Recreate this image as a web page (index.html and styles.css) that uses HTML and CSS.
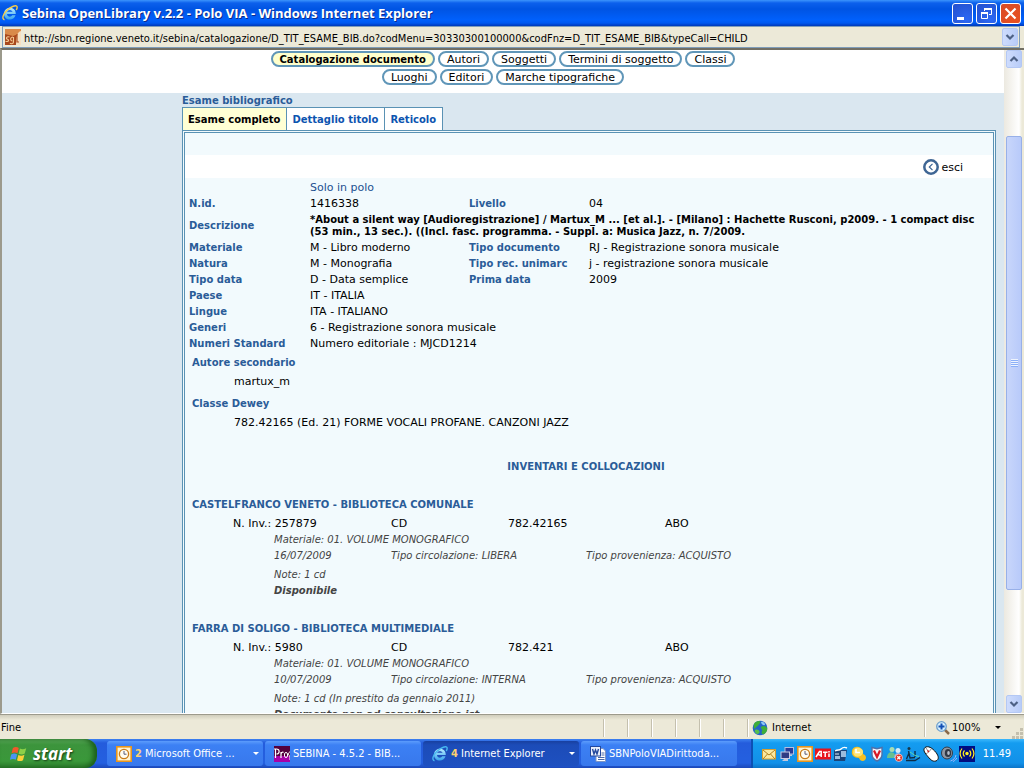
FILE: index.html
```html
<!DOCTYPE html>
<html lang="it">
<head>
<meta charset="utf-8">
<title>Sebina OpenLibrary v.2.2 - Polo VIA</title>
<link rel="stylesheet" href="styles.css">
</head>
<body>
<svg class="defs" aria-hidden="true">
  <defs>
    <linearGradient id="ieg" x1="0" y1="0" x2="0" y2="1"><stop offset="0" stop-color="#b8ecff"/><stop offset="1" stop-color="#38a4ec"/></linearGradient>
    <symbol id="ie" viewBox="0 0 16 16">
      <path d="M13.800 9H5c.2 3.300 4.400 3.300 5.200 1.300h3.300c-1 3-3.200 4.200-5.500 4.200-3.500 0-6-2.300-6-5.800S4.600 2.700 8 2.700c3.500 0 5.900 2.400 5.800 6.300zM10.600 6.800C10.200 4.700 5.500 4.700 5.100 6.800z" fill="url(#ieg)"/>
      <path d="M2.500 14.800C-.5 14 1 9 5 5.200 9 1.400 14.300-.4 15 1.600c.3.900-.1 2.300-.8 3.400" fill="none" stroke="#f6cc48" stroke-width="1.400"/>
    </symbol>
    <symbol id="ieblue" viewBox="0 0 16 16">
      <path d="M13.800 9H5c.2 3.300 4.400 3.300 5.200 1.300h3.300c-1 3-3.200 4.200-5.500 4.200-3.500 0-6-2.300-6-5.800S4.600 2.700 8 2.700c3.500 0 5.900 2.400 5.800 6.300zM10.600 6.800C10.200 4.700 5.500 4.700 5.100 6.800z" fill="url(#ieg)"/>
      <path d="M2.500 14.800C-.5 14 1 9 5 5.200 9 1.400 14.300-.4 15 1.600c.3.900-.1 2.300-.8 3.400" fill="none" stroke="#48b8f0" stroke-width="1.400"/>
    </symbol>
    <symbol id="clock" viewBox="0 0 16 16">
      <rect x=".8" y=".8" width="14.400" height="14.400" fill="#fff3d0" stroke="#e8951c" stroke-width="1.600"/>
      <circle cx="8" cy="8" r="4.600" fill="#fffdf2" stroke="#c97a18" stroke-width="1.300"/>
      <path d="M8 5v3.200h2.500" fill="none" stroke="#5a5a78" stroke-width="1"/>
    </symbol>
    <symbol id="chevdown" viewBox="0 0 10 8"><path d="M1.500 2L5 5.500 8.500 2" fill="none" stroke="#4d6185" stroke-width="2.200"/></symbol>
  </defs>
</svg>

<header class="titlebar">
  <svg class="ico"><use href="#ie"/></svg>
  <h1>Sebina OpenLibrary v.2.2 - Polo VIA - Windows Internet Explorer</h1>
  <button class="winbtn" aria-label="Riduci a icona"><svg viewBox="0 0 19 19"><path d="M4 14.500h7" stroke="#fff" stroke-width="3"/></svg></button>
  <button class="winbtn" aria-label="Ripristina"><svg viewBox="0 0 19 19"><path d="M7.500 7V4.500h7v6H12M4.500 8.500h6v6h-6z" fill="none" stroke="#fff"/><path d="M7 5h8M4 9h7" stroke="#fff" stroke-width="2"/></svg></button>
  <button class="winbtn close" aria-label="Chiudi"><svg viewBox="0 0 19 19"><path d="M4.500 4.500l10 10m0-10l-10 10" stroke="#fff" stroke-width="2.200"/></svg></button>
</header>

<div class="address">
  <svg class="ico" viewBox="0 0 16 16"><rect width="16" height="16" fill="#a8481c"/><path d="M0 0h16v4L8 7 0 5z" fill="#d98a4a"/><path d="M11 16c0-8 1-13 5-14v14z" fill="#f6dfc0"/><path d="M4.500 8c-3-1-4 1.500-2 2.200s1 3-2 2M8 8c-3 0-3 4-.5 4M8.500 8v5c0 2-3 2-3.500 1" fill="none" stroke="#f4c890" stroke-width="1.100"/><path d="M12 5v8h2" fill="none" stroke="#b05020" stroke-width="1.200"/></svg>
  <input type="text" aria-label="Indirizzo" value="http://sbn.regione.veneto.it/sebina/catalogazione/D_TIT_ESAME_BIB.do?codMenu=30330300100000&amp;codFnz=D_TIT_ESAME_BIB&amp;typeCall=CHILD">
  <button class="bluebtn" aria-label="Mostra indirizzi"><svg viewBox="0 0 10 8"><use href="#chevdown"/></svg></button>
</div>

<div class="window">
  <main class="page">
    <nav class="pills">
      <div class="pillrow"><a href="#" class="pill current">Catalogazione documento</a><a href="#" class="pill">Autori</a><a href="#" class="pill">Soggetti</a><a href="#" class="pill">Termini di soggetto</a><a href="#" class="pill">Classi</a></div>
      <div class="pillrow"><a href="#" class="pill">Luoghi</a><a href="#" class="pill">Editori</a><a href="#" class="pill">Marche tipografiche</a></div>
    </nav>
    <div class="body">
      <h2>Esame bibliografico</h2>
      <nav class="tabs"><a href="#" class="tab current">Esame completo</a><a href="#" class="tab">Dettaglio titolo</a><a href="#" class="tab">Reticolo</a></nav>
      <section class="panel">
        <div class="tools"><a href="#" class="exit"><svg viewBox="0 0 16 16"><circle cx="8" cy="8" r="6.700" fill="#fff" stroke="#3f6694" stroke-width="2.500"/><path d="M9.500 4.800L6.300 8l3.200 3.200" fill="none" stroke="#3f6694" stroke-width="1.200"/></svg><span>esci</span></a></div>
        <table class="details">
          <colgroup><col class="c1"><col class="c2"><col class="c3"><col></colgroup>
          <tr><td></td><td colspan="3" class="scope">Solo in polo</td></tr>
          <tr><th>N.id.</th><td>1416338</td><th>Livello</th><td>04</td></tr>
          <tr><th>Descrizione</th><td colspan="3" class="desc"><b>*About a silent way [Audioregistrazione] / Martux_M ... [et al.]. - [Milano] : Hachette Rusconi, p2009. - 1 compact disc (53 min., 13 sec.). ((Incl. fasc. programma. - Suppl. a: Musica Jazz, n. 7/2009.</b></td></tr>
          <tr><th>Materiale</th><td>M - Libro moderno</td><th>Tipo documento</th><td>RJ - Registrazione sonora musicale</td></tr>
          <tr><th>Natura</th><td>M - Monografia</td><th>Tipo rec. unimarc</th><td>j - registrazione sonora musicale</td></tr>
          <tr><th>Tipo data</th><td>D - Data semplice</td><th>Prima data</th><td>2009</td></tr>
          <tr><th>Paese</th><td colspan="3">IT - ITALIA</td></tr>
          <tr><th>Lingue</th><td colspan="3">ITA - ITALIANO</td></tr>
          <tr><th>Generi</th><td colspan="3">6 - Registrazione sonora musicale</td></tr>
          <tr><th>Numeri Standard</th><td colspan="3">Numero editoriale : MJCD1214</td></tr>
        </table>
        <div class="links">
          <h3>Autore secondario</h3><p>martux_m</p>
          <h3>Classe Dewey</h3><p>782.42165 (Ed. 21) FORME VOCALI PROFANE. CANZONI JAZZ</p>
        </div>
        <h3 class="invtitle">INVENTARI E COLLOCAZIONI</h3>
        <article class="library">
          <h3>CASTELFRANCO VENETO - BIBLIOTECA COMUNALE</h3>
          <div class="inv"><span>N. Inv.: 257879</span><span>CD</span><span>782.42165</span><span>ABO</span></div>
          <div class="more">
            <p>Materiale: 01. VOLUME MONOGRAFICO</p>
            <p class="three"><span>16/07/2009</span><span>Tipo circolazione: LIBERA</span><span>Tipo provenienza: ACQUISTO</span></p>
            <p class="note">Note: 1 cd</p>
            <p><b>Disponibile</b></p>
          </div>
        </article>
        <article class="library">
          <h3>FARRA DI SOLIGO - BIBLIOTECA MULTIMEDIALE</h3>
          <div class="inv"><span>N. Inv.: 5980</span><span>CD</span><span>782.421</span><span>ABO</span></div>
          <div class="more">
            <p>Materiale: 01. VOLUME MONOGRAFICO</p>
            <p class="three"><span>10/07/2009</span><span>Tipo circolazione: INTERNA</span><span>Tipo provenienza: ACQUISTO</span></p>
            <p class="note">Note: 1 cd (In prestito da gennaio 2011)</p>
            <p><b>Documento non ad consultazione ist</b></p>
          </div>
        </article>
      </section>
    </div>
  </main>
  <div class="scroll">
    <button class="bluebtn" aria-label="Scorri su"><svg class="up" viewBox="0 0 10 8"><use href="#chevdown"/></svg></button>
    <div class="track"><div class="thumb"><i></i></div></div>
    <button class="bluebtn" aria-label="Scorri giù"><svg viewBox="0 0 10 8"><use href="#chevdown"/></svg></button>
  </div>
</div>

<footer class="status">
  <span class="msg">Fine</span>
  <span class="cell"></span><span class="cell"></span><span class="cell"></span><span class="cell"></span><span class="cell"></span><span class="cell"></span>
  <span class="zone"><svg class="ico" viewBox="0 0 16 16"><circle cx="8" cy="8" r="7.300" fill="#2463c8"/><path d="M2 4c2-3 5-3.500 6-2.500S7 4 6.500 5 4 7 3 8.500 1.500 6 2 4zM9 7c2-2 5-1 6 1s-1 5-3 6-3-1-2-3-2-3-1-4z" fill="#3fae38"/><path d="M3 10c2-1 4 0 4.500 1.500S6 14.500 5 14s-3-2-2-4z" fill="#57c04a"/><path d="M9 2c2-1 4 1 4 2.500S9 5 9 2z" fill="#8cc8f4"/></svg>Internet</span>
  <button class="zoom"><svg class="ico" viewBox="0 0 16 16"><path d="M9.500 9.500L14 14" stroke="#8a6a4a" stroke-width="2.500"/><circle cx="6.500" cy="6.500" r="4.800" fill="#d6f0ff" stroke="#6fa0cc" stroke-width="1.300"/><path d="M6.500 3.500v6M3.500 6.500h6" stroke="#1450b4" stroke-width="2"/></svg>100%<i class="drop"></i></button>
  <svg class="grip" viewBox="0 0 12 12"><path d="M8 1h3v3H8zM4 5h3v3H4zM8 5h3v3H8zM0 9h3v3H0zM4 9h3v3H4zM8 9h3v3H8z" fill="#c4c0ae"/></svg>
</footer>

<div class="taskbar">
  <button class="start"><svg viewBox="0 0 18 18"><path d="M3.500 3.500c2-1.200 3.700-1 5.300 0L7.600 8.300c-1.700-1-3.300-1-5.300 0z" fill="#f0582c"/><path d="M9.800 4c1.700 1 3.300 1 5.700-.2L14.200 8.600c-2 1.100-3.700 1-5.500.1z" fill="#8cd048"/><path d="M2 9.400c2-1.100 3.600-1 5.300 0L6.100 14.200c-1.700-1-3.300-1-5.300 0z" fill="#4a94f4"/><path d="M8.400 9.800c1.700 1 3.400 1 5.500-.1l-1.300 4.900c-2 1.100-3.700 1-5.400 0z" fill="#fbd038"/></svg>start</button>
  <div class="tasks">
    <button class="task"><svg class="ico"><use href="#clock"/></svg><span><b>2</b> Microsoft Office ...</span><i class="drop"></i></button>
    <button class="task"><svg class="ico" viewBox="0 0 16 16"><rect width="16" height="16" fill="#54003c"/><rect y="10" width="16" height="6" fill="#a800a8"/><path d="M1.500 3v9M0 3h2.500c3.500 0 3.500 5 0 5M7 6v6m0-4c.5-2 2-2 2.500-1.500" fill="none" stroke="#fff" stroke-width="1.200"/><ellipse cx="12" cy="9" rx="1.600" ry="2.600" fill="none" stroke="#fff"/><path d="M16 6c-2 0-2 4 0 4v4" fill="none" stroke="#fff"/></svg><span>SEBINA - 4.5.2 - BIB...</span></button>
    <button class="task active"><svg class="ico"><use href="#ieblue"/></svg><span><b>4</b> Internet Explorer</span><i class="drop"></i></button>
    <button class="task"><svg class="ico" viewBox="0 0 16 16"><path d="M6 2.500h7l2.500 2.500v10.500H6z" fill="#fff" stroke="#7c94c4"/><path d="M11.500 7h3m-3 2h3m-6.500 2.500h6.500m-6.500 2h6.500" stroke="#4868a8"/><rect x=".5" y=".5" width="10" height="9.500" fill="#eaf0fc" stroke="#24489c"/><path d="M2.500 3l1.500 5 1.500-4 1.500 4 1.500-5" fill="none" stroke="#24489c" stroke-width="1.400"/></svg><span>SBNPoloVIADirittoda...</span></button>
  </div>
  <div class="tray">
    <svg class="ico" viewBox="0 0 16 16"><rect x="1.500" y="3.500" width="13" height="9.500" fill="#fbe9a0" stroke="#d8a030"/><path d="M2 4l6 5 6-5M2 13l4.500-5M14 13L9.500 8" fill="none" stroke="#b08020"/></svg>
    <svg class="ico" viewBox="0 0 16 16"><rect x="6" y="1.500" width="8.500" height="6.500" fill="#283c98" stroke="#b4bce0"/><path d="M9 8.500h4v1.500H9z" fill="#c4c8dc"/><rect x="2" y="6" width="8.500" height="6.500" fill="#303c84" stroke="#c8cce4"/><path d="M5 13h4v2H3z" fill="#c4c8dc"/></svg>
    <svg class="ico"><use href="#clock"/></svg>
    <svg class="ico" viewBox="0 0 16 16"><rect y="2.500" width="16" height="11" fill="#e8141c"/><path d="M1 11L4.500 5.500h1.700V11M3.500 9h3M8 6.200h4.500M10.200 6.500V11M14 7.500V11M14 5v1.500" fill="none" stroke="#fff" stroke-width="1.500"/></svg>
    <svg class="ico" viewBox="0 0 16 16"><path d="M1 4h13l-2 11H1z" fill="#1c4478"/><path d="M2 10h5v3H2zm6-5h5v6H8z" fill="#9cbcdc"/><path d="M2 5c3-2 4 0 6-2s4-2 6-1" fill="none" stroke="#fff" stroke-width="1.400"/><path d="M2 8h4" stroke="#dce8f4"/></svg>
    <svg class="ico" viewBox="0 0 16 16"><path d="M5 1C8 0 13 3 12 8c3 1 4 4 2 6s-5 1-6-2C3 12 0 9 1 5c0-2 2-4 4-4z" fill="#f8c020"/><path d="M5 2c-3 1-4 6-1 8 4 2 8-1 8-4S8 1 5 2z" fill="#ffe474"/><path d="M5 3v3.500h4" fill="none" stroke="#fff" stroke-width="1.600"/></svg>
    <svg class="ico" viewBox="0 0 16 16"><path d="M3 1.500l5 1.300 5-1.300v7c0 3-2 5-5 6.500-3-1.500-5-3.500-5-6.500z" fill="#f4f6fc" stroke="#5070a8" stroke-width="1.400"/><path d="M5 4.500L8 11l3-6.500" fill="none" stroke="#d81824" stroke-width="2.200"/></svg>
    <svg class="ico" viewBox="0 0 16 16"><circle cx="5" cy="3.500" r="2.500" fill="#a8dcb0"/><path d="M0 12c0-7 8-8 9 0z" fill="#68c090"/><circle cx="11" cy="4.500" r="2.500" fill="#d4ecfc"/><path d="M7 12c0-7 8-6 8 0z" fill="#88b4ec"/><circle cx="11.800" cy="11.800" r="3.700" fill="#e02c20" stroke="#fff" stroke-width=".6"/><path d="M10.300 10.300l3 3m0-3l-3 3" stroke="#fff" stroke-width="1.300"/></svg>
    <svg class="ico" viewBox="0 0 16 16"><circle cx="4" cy="2.500" r="1.500" fill="#183848"/><path d="M1 14.500h9l5-3M3.500 5l1.500 7 5-.5M1.500 13l2.500-6M10 5v6" fill="none" stroke="#102c44" stroke-width="1.400"/><path d="M5 6l5 3.500 4 1" stroke="#5cd4b0" fill="none"/></svg>
    <svg class="ico" viewBox="0 0 16 16"><path d="M2 1.500c3-2 7 0 11 5 3 4 3 7 0 8.500-4 1-6-2-9-5.500S0 3.500 2 1.500z" fill="#fff" stroke="#111" stroke-width="1"/><path d="M3 8c2-1.500 4-3 5.500-5.500M5 5L3 2" fill="none" stroke="#555" stroke-width=".7"/><path d="M4.500 4.500l1.500 1.500" stroke="#d02020" stroke-width="1.500"/></svg>
    <svg class="ico" viewBox="0 0 16 16"><ellipse cx="6" cy="7" rx="5.500" ry="6" fill="#9098a4" stroke="#343c48"/><ellipse cx="7" cy="7" rx="3.200" ry="4" fill="#303844"/><ellipse cx="7.500" cy="7" rx="1.300" ry="2" fill="#b8c0cc"/><path d="M9.500 15c3-1 5-3 5.500-6M12 15.500c2-1 3-2 3.800-3.500" fill="none" stroke="#9cb4fc"/></svg>
    <svg class="ico" viewBox="0 0 16 16"><rect width="16" height="16" fill="#000c80"/><circle cx="8" cy="7.500" r="1.700" fill="#fff020"/><path d="M5.500 4.500c-1.700 2-1.700 4 0 6M3 2.500c-2.300 3-2.300 7 0 10M10.500 4.500c1.700 2 1.700 4 0 6M13 2.500c2.300 3 2.300 7 0 10" fill="none" stroke="#fff020" stroke-width="1.200"/></svg>
    <time>11.49</time>
  </div>
</div>
</body>
</html>
```
FILE: styles.css
```css
* { box-sizing: border-box; }
body { margin: 0; height: 100vh; display: flex; flex-direction: column; overflow: hidden; background: #ece9d8; color: #000; font: 11px/16px "DejaVu Sans", Verdana, sans-serif; }
h1, h2, h3, p { margin: 0; font-size: inherit; }
a { color: inherit; text-decoration: none; }
button { border: 0; padding: 0; margin: 0; background: none; font: inherit; color: inherit; }
.defs { position: absolute; width: 0; height: 0; }
.ico { width: 16px; height: 16px; flex: none; }

.titlebar { flex: none; height: 26px; display: flex; align-items: center; gap: 2px; padding: 0 3px 0 2px; background: linear-gradient(#3c94fc 0, #0c60ec 3px, #0054e3 9px, #0060fc 20px, #0058f0 23px, #0038b8 26px); }
.titlebar h1 { flex: 1; color: #fff; font: bold 13px/18px "Open Sans", "Trebuchet MS", sans-serif; padding-left: 2px; text-shadow: 1px 1px #0c2c8c; }
.winbtn { width: 21px; height: 21px; border: 1px solid #fff; border-radius: 3px; background: radial-gradient(circle at 70% 80%, #2c68f4, #2450cc); }
.winbtn + .winbtn { margin-left: 1px; }
.winbtn svg { display: block; width: 19px; height: 19px; }
.winbtn.close { background: radial-gradient(circle at 70% 80%, #e85020, #d84c28); }

.address { flex: none; height: 22px; margin: 0 4px 0 2px; padding: 1px 1px 1px 2px; display: flex; align-items: center; gap: 3px; border: 1px solid #7f9db9; background: #ece9d8; }
.address input { flex: 1; min-width: 0; height: 18px; border: 0; padding: 2px 0 0; background: transparent; color: #000; font: 11px/16px "DejaVu Sans Condensed", Tahoma, sans-serif; }
.bluebtn { flex: none; display: flex; align-items: center; justify-content: center; width: 16px; height: 18px; border: 1px solid #b4c8f4; border-radius: 2px; background: linear-gradient(90deg, #cedcfd, #b8ccf8); }
.bluebtn svg { width: 10px; height: 8px; }
.bluebtn .up { transform: rotate(180deg); }

.window { flex: 1; min-height: 0; display: flex; border-top: 2px solid #716f64; border-left: 2px solid #9c9a8c; border-bottom: 1px solid #fff; background: #fff; }
.page { flex: 1; min-width: 0; overflow: hidden; display: flex; flex-direction: column; background: #fff; }
.pills { flex: none; height: 43px; padding-top: 1px; display: flex; flex-direction: column; gap: 2px; }
.pillrow { display: flex; justify-content: center; gap: 3px; }
.pill { height: 16px; border: 2px solid #6096b8; border-radius: 8px; padding: 0 7px; line-height: 14px; background: #fff; }
.pill.current { background: #ffffcc; font-size: 10px; font-weight: bold; }
.body { flex: none; padding: 0 8px 0 180px; background: #dae7f0; }
h2, h3, .details th { color: #2a5c98; font-size: 10px; font-weight: bold; }
h2 { padding-top: 2px; line-height: 12px; }
.tabs { display: flex; height: 23px; }
.tab { border: 1px solid #5a92b4; border-bottom: 0; margin-right: -1px; padding: 0 6px 0 5px; background: #fff; color: #0c54b0; font-size: 10px; font-weight: bold; line-height: 23px; }
.tab.current { background: #ffffd4; color: #000; }
.panel { border: 3px double #5a92b4; padding-top: 22px; background: #f2fafd; }
.tools { height: 23px; display: flex; justify-content: flex-end; align-items: center; padding-right: 30px; background: #fff; }
.exit { display: flex; align-items: center; gap: 2px; }
.exit svg { width: 16px; height: 16px; }
.exit span { padding-top: 2px; }
.details { width: 100%; margin-top: 2px; border-collapse: collapse; table-layout: fixed; }
.details td, .details th { padding: 0 4px; text-align: left; height: 16px; }
.c1 { width: 121px; } .c2 { width: 159px; } .c3 { width: 120px; }
.details .scope { color: #1c5090; }
.details .desc { font-size: 10px; line-height: 12px; padding: 2px 4px; }
.links { padding: 3px 0 0 7px; }
.links h3 { line-height: 16px; }
.links p { padding: 3px 0 6px 42px; }
.invtitle { text-align: center; margin-top: 22px; padding-right: 6px; }
.library { padding: 22px 0 0 7px; }
.inv { display: grid; grid-template-columns: 158px 117px 157px 1fr; padding: 3px 0 0 41px; }
.more { padding-left: 82px; color: #444; font-size: 10px; font-style: italic; }
.three { display: grid; grid-template-columns: 117px 195px 1fr; }
.note { padding-top: 3px; }

.scroll { flex: none; width: 20px; padding: 0 2px; display: flex; flex-direction: column; background: linear-gradient(90deg, #ece9e0, #fff 15px, #ece9d8 18px); }
.track { flex: 1; padding-top: 68px; }
.thumb { height: 454px; border: 1px solid #98b0e8; border-radius: 2px; display: flex; align-items: center; justify-content: center; background: linear-gradient(90deg, #c8d6fb, #b8cafa); }
.thumb i { width: 7px; height: 8px; background: repeating-linear-gradient(#eef4fe 0 1px, #8cb0f8 1px 2px); }

.status { flex: none; height: 25px; padding-top: 1px; display: flex; align-items: center; border-top: 1px solid #9c9a8c; background: linear-gradient(#d0cdbc, #ece9d8 5px, #ece9d8); font: 11px/22px "DejaVu Sans Condensed", Tahoma, sans-serif; }
.msg { flex: 1; padding-left: 1px; }
.cell, .zone, .zoom { height: 18px; border-left: 1px solid #c4c0ae; box-shadow: inset 1px 0 #fff; }
.cell { width: 24px; }
.zone { width: 177px; display: flex; align-items: center; gap: 4px; padding-left: 4px; }
.zoom { width: 88px; display: flex; align-items: center; gap: 1px; padding-left: 10px; }
.drop { flex: none; border: 3px solid transparent; border-top-color: currentColor; border-bottom: 0; }
.zoom .drop { margin-left: 14px; }
.grip { width: 12px; height: 12px; align-self: flex-end; }

.taskbar { flex: none; height: 29px; display: flex; background: linear-gradient(#3c80f0 0, #245cdc 4px, #2460e0 24px, #1c48b8); color: #fff; font: 11px/16px "DejaVu Sans Condensed", Tahoma, sans-serif; }
.start { flex: none; width: 97px; padding: 0 0 0 9px; display: flex; align-items: center; gap: 4px; border-radius: 0 12px 12px 0; background: linear-gradient(#5cac5c 0, #3c943c 6px, #3a983a 22px, #2c7c2c); box-shadow: inset -4px 0 5px #1c601c; font: italic bold 17px/24px "Open Sans", sans-serif; text-shadow: 1px 1px 2px #143c14; }
.start svg { width: 20px; height: 20px; }
.tasks { flex: 1; min-width: 0; display: flex; gap: 2px; padding: 2px 14px 2px 10px; }
.task { flex: 1 1 0; min-width: 0; display: flex; align-items: center; gap: 3px; padding: 0 4px 0 9px; border-radius: 3px; background: linear-gradient(#5c9cfc, #3c80f4 4px, #3878ec); color: #fff; text-align: left; }
.task span { flex: 1; min-width: 0; overflow: hidden; white-space: nowrap; }
.task b { color: #fcd070; }
.task.active { background: linear-gradient(#1840a0, #1c4cb8 4px, #1e50c0); }
.tray { flex: none; width: 273px; display: flex; align-items: center; gap: 2px; padding: 0 13px 0 8px; border-left: 2px solid #0c50b4; background: linear-gradient(#3cb8fc 0, #149cf0 4px, #1290e8 24px, #0c74c8); }
.tray time { margin-left: auto; }
```
